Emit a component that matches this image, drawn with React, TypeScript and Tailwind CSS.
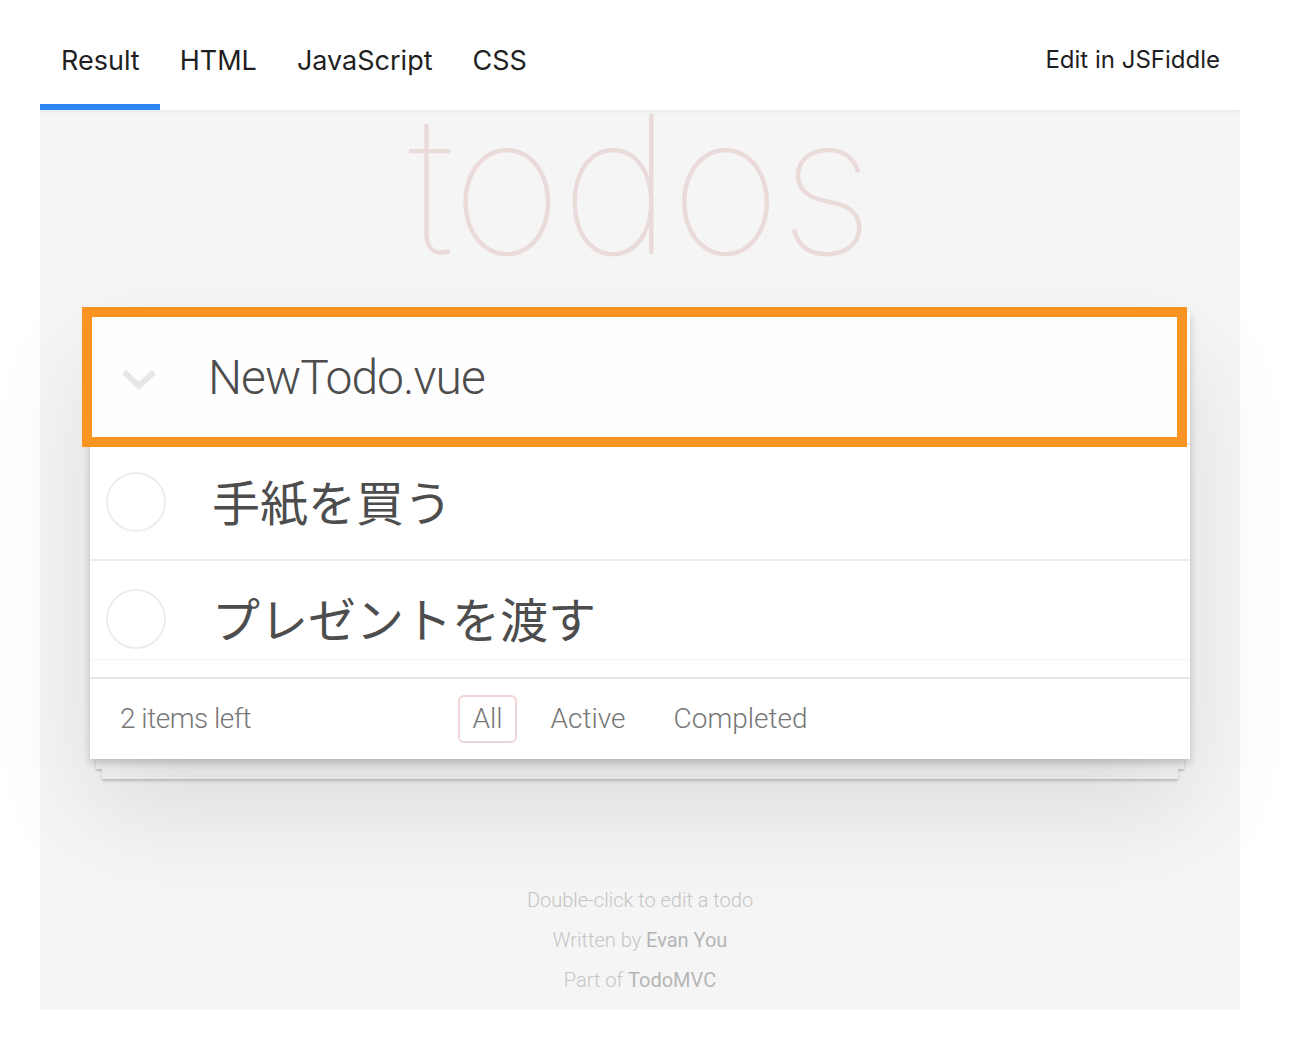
import React from "react";

const tabs = ["Result", "HTML", "JavaScript", "CSS"];

const todos = ["手紙を買う", "プレゼントを渡す"];

const Chevron = () => (
  <svg width="34" height="22" viewBox="0 0 34 22">
    <path d="M2 3 L17 17 L32 3" fill="none" stroke="#e6e6e6" strokeWidth="6" />
  </svg>
);

const TodoRow = ({ text, last }: { text: string; last?: boolean }) => (
  <li
    className={`flex items-center h-[116px] ${last ? "" : "border-b-2 border-[#ededed]"}`}
  >
    <div className="ml-[16px] w-[60px] h-[60px] rounded-full border-2 border-[#ededed]" />
    <span className="ml-[46px] mb-[4px] text-[48px] leading-none text-[#4d4d4d] font-['Noto_Sans_CJK_JP',sans-serif] font-normal">
      {text}
    </span>
  </li>
);

export default function App() {
  return (
    <div className="min-h-[1054px] bg-white font-['Helvetica_Neue',Roboto,'Liberation_Sans',sans-serif]">
      <div className="ml-10 w-[1200px]">
        {/* top tabs */}
        <div className="flex items-stretch h-[110px]">
          {tabs.map((t, i) => (
            <div
              key={t}
              className={`flex items-center px-[20px] pt-[18px] text-[27px] leading-8 text-[#1f1f1f] font-['Inter',sans-serif] border-b-[6px] ${
                i === 0 ? "border-[#2f86f6] pl-[21px]" : "border-transparent"
              }`}
            >
              {t}
            </div>
          ))}
          <div className="ml-auto flex items-center pr-5 pt-[10px] text-[24px] leading-8 text-[#1f1f1f] font-['Inter',sans-serif]">
            Edit in JSFiddle
          </div>
        </div>

        {/* result pane */}
        <div className="h-[900px] bg-[#f5f5f5] shadow-[inset_0_5px_6px_-5px_rgba(0,0,0,0.08)]">
          <h1 className="h-[200px] flex items-start justify-center text-[192px] leading-[148px] font-thin text-[#eadada] tracking-[-2px] font-['Helvetica_Neue',Inter,sans-serif]">
            todos
          </h1>

          <section className="mt-[2px] mx-auto w-[1100px]">
            <div className="relative bg-white shadow-[0_4px_8px_0_rgba(0,0,0,0.2),0_50px_100px_0_rgba(0,0,0,0.1)]">
              {/* header / new todo */}
              <div className="relative flex items-center h-[133px] bg-[#fefefe] border-b-2 border-[#e6e6e6]">
                <div className="ml-[32px] mt-[4px]">
                  <Chevron />
                </div>
                <span className="ml-[52px] text-[48px] leading-none font-light tracking-[-1px] text-[#4d4d4d]">
                  NewTodo.vue
                </span>
                {/* highlight annotation */}
                <div className="absolute left-[-8px] top-[-5px] w-[1105px] h-[140px] border-[10px] border-[#f99322] pointer-events-none" />
              </div>

              <ul>
                {todos.map((t, i) => (
                  <TodoRow key={t} text={t} last={i === todos.length - 1} />
                ))}
              </ul>

              {/* footer */}
              <div className="relative grid grid-cols-[1fr_auto_1fr] items-center h-[82px] px-[30px] border-t-2 border-[#e6e6e6] text-[28px] font-light text-[#777]">
                <div className="absolute left-0 right-0 top-[-20px] h-px bg-[#f5f5f5]" />
                <span className="tracking-[-0.5px]">2 items left</span>
                <ul className="flex items-center gap-[20px]">
                  <li className="px-[12px] h-[48px] flex items-center border-2 border-[#efd5d5] rounded-[6px]">
                    All
                  </li>
                  <li className="px-[14px]">Active</li>
                  <li className="px-[14px]">Completed</li>
                </ul>
                <span />
              </div>
            </div>
            <div className="mx-[6px] h-[10px] bg-[#f6f6f6] shadow-[0_2px_2px_rgba(0,0,0,0.2)]" />
            <div className="mx-[12px] h-[10px] bg-[#f6f6f6] shadow-[0_2px_3px_rgba(0,0,0,0.2)]" />
          </section>

          {/* info */}
          <footer className="mt-[111px] flex flex-col items-center gap-5 text-[20px] leading-5 font-light text-[#c6c6c6]">
            <p>Double-click to edit a todo</p>
            <p>
              Written by <span className="font-normal text-[#b5b5b5]">Evan You</span>
            </p>
            <p>
              Part of <span className="font-normal text-[#b5b5b5]">TodoMVC</span>
            </p>
          </footer>
        </div>
      </div>
    </div>
  );
}
